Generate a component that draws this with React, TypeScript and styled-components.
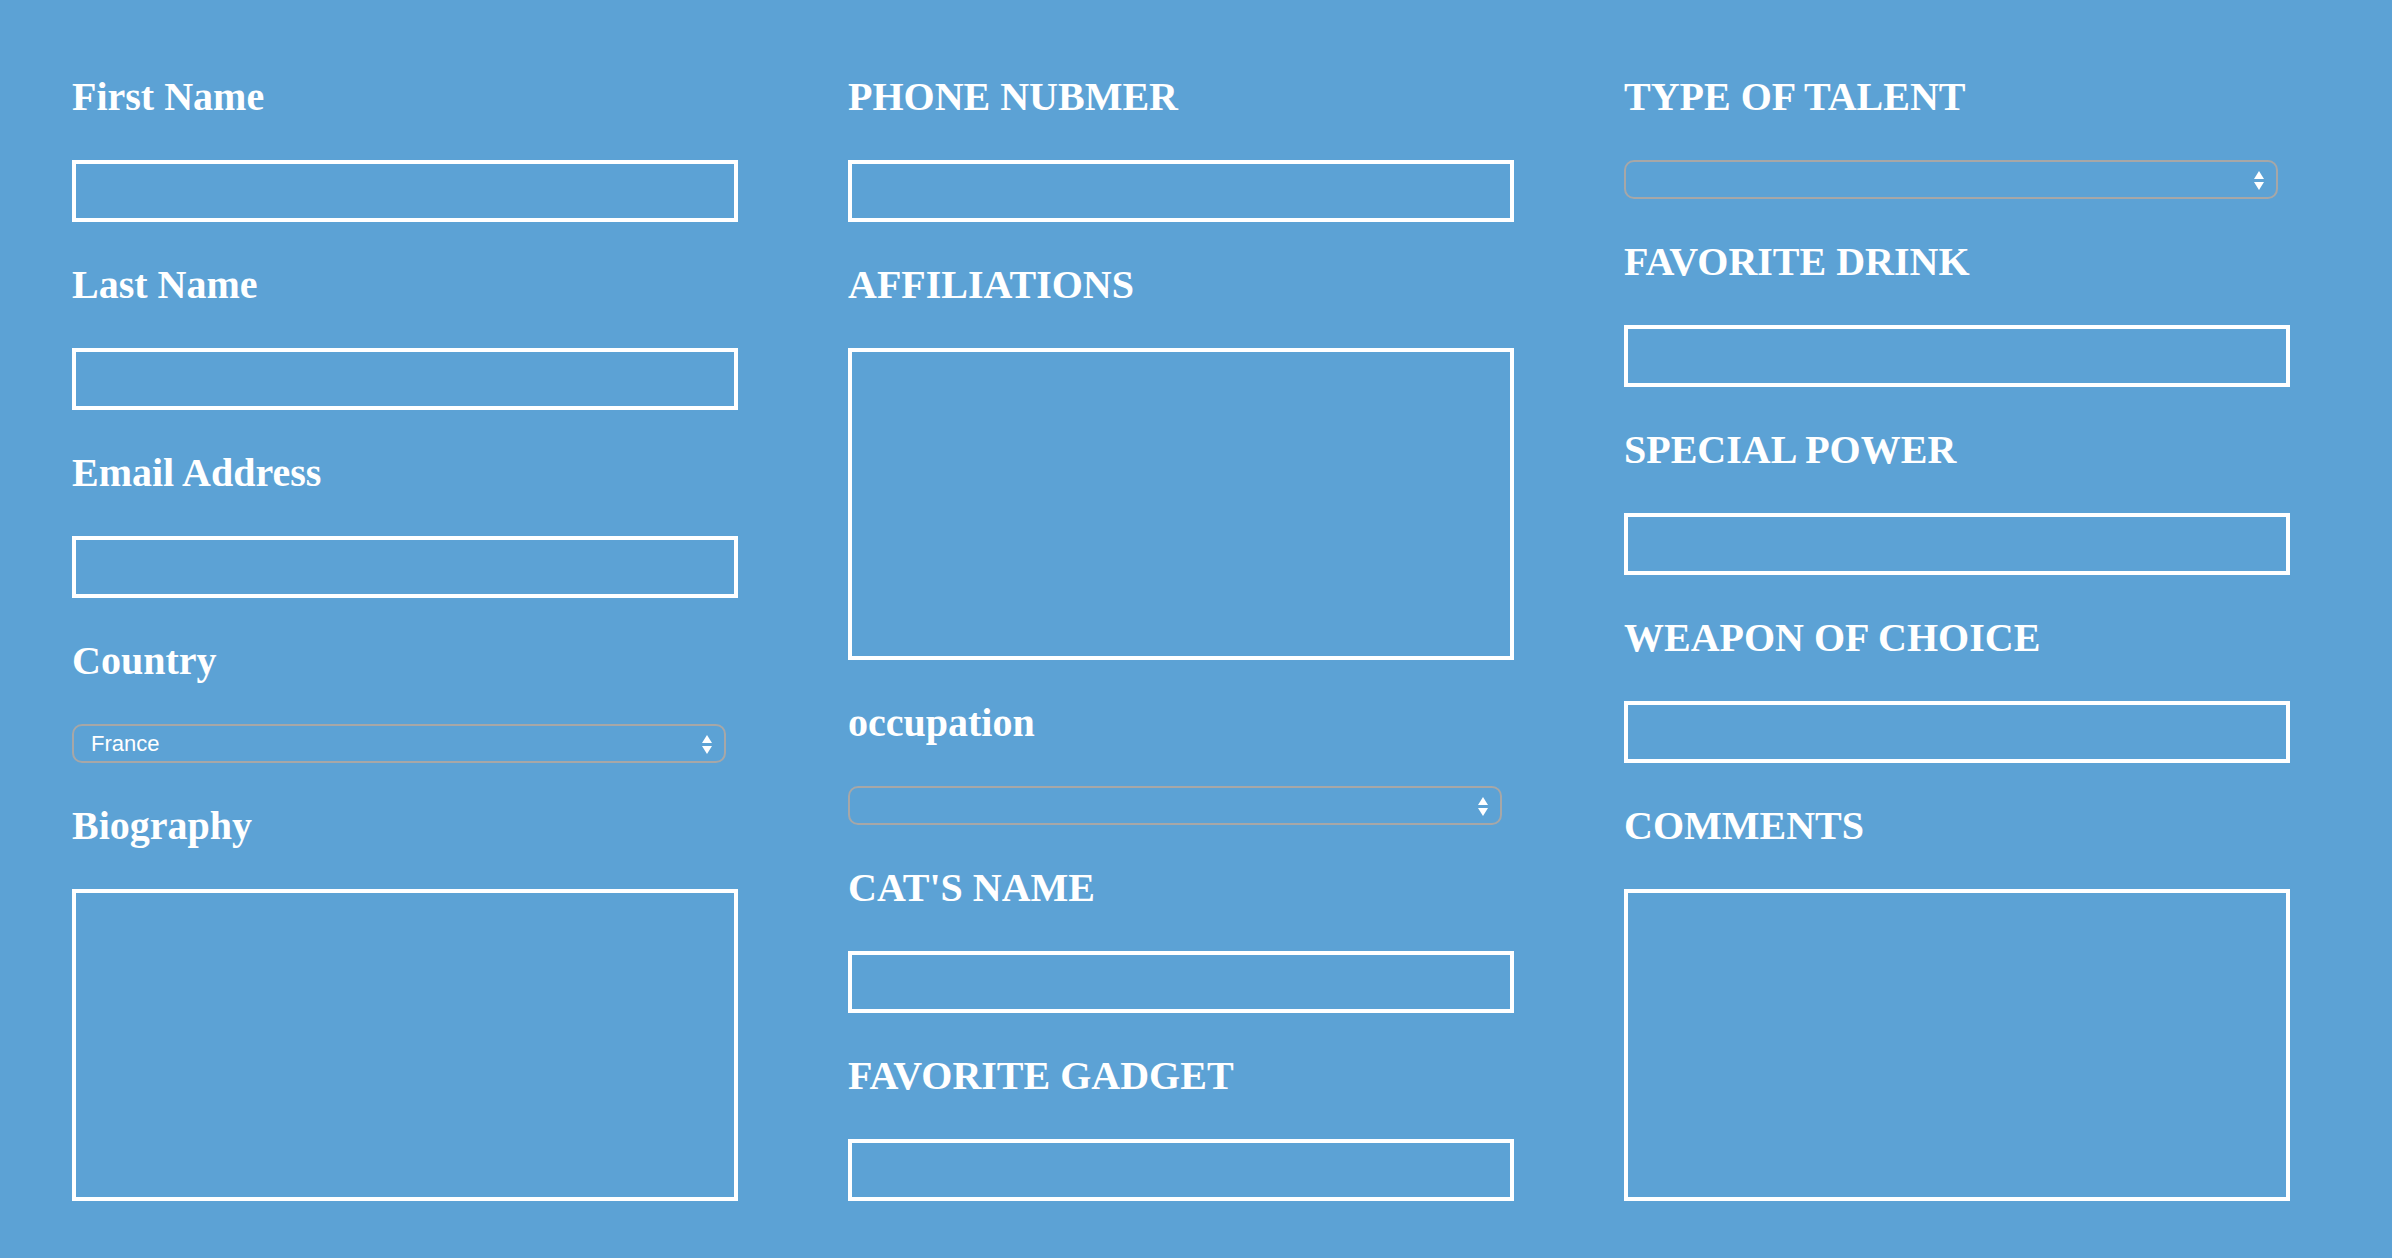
import styled, { createGlobalStyle } from "styled-components";

type FieldKindT = "input" | "textarea" | "select";

type FieldT = {
  id: string;
  label: string;
  kind: FieldKindT;
  value?: string;
};

const columns: Array<Array<FieldT>> = [
  [
    { id: "first-name", label: "First Name", kind: "input" },
    { id: "last-name", label: "Last Name", kind: "input" },
    { id: "email", label: "Email Address", kind: "input" },
    { id: "country", label: "Country", kind: "select", value: "France" },
    { id: "biography", label: "Biography", kind: "textarea" },
  ],
  [
    { id: "phone", label: "PHONE NUBMER", kind: "input" },
    { id: "affiliations", label: "AFFILIATIONS", kind: "textarea" },
    { id: "occupation", label: "occupation", kind: "select", value: "" },
    { id: "cat-name", label: "CAT'S NAME", kind: "input" },
    { id: "gadget", label: "FAVORITE GADGET", kind: "input" },
  ],
  [
    { id: "talent", label: "TYPE OF TALENT", kind: "select", value: "" },
    { id: "drink", label: "FAVORITE DRINK", kind: "input" },
    { id: "power", label: "SPECIAL POWER", kind: "input" },
    { id: "weapon", label: "WEAPON OF CHOICE", kind: "input" },
    { id: "comments", label: "COMMENTS", kind: "textarea" },
  ],
];

const GlobalStyle = createGlobalStyle`
  html, body {
    margin: 0;
    padding: 0;
    background-color: #5ca2d5;
    min-height: 100%;
  }
  body {
    min-height: 100vh;
  }
`;

const Arrows = () => (
  <ArrowsS width="12" height="20" viewBox="0 0 12 20" aria-hidden="true">
    <path d="M6 1 L11 9 L1 9 Z" fill="#fff" />
    <path d="M1 12 L11 12 L6 20 Z" fill="#fff" />
  </ArrowsS>
);

const Field = ({ field }: { field: FieldT }) => {
  return (
    <>
      <LabelS htmlFor={field.id}>{field.label}</LabelS>
      {field.kind === "input" && <InputS id={field.id} type="text" />}
      {field.kind === "textarea" && <TextAreaS id={field.id} />}
      {field.kind === "select" && (
        <SelectWrapS>
          <SelectS id={field.id} defaultValue={field.value}>
            {field.value ? <option>{field.value}</option> : <option value="" />}
          </SelectS>
          <Arrows />
        </SelectWrapS>
      )}
    </>
  );
};

const App = () => {
  return (
    <>
      <GlobalStyle />
      <FormS onSubmit={(e) => e.preventDefault()}>
        {columns.map((column, index) => {
          return (
            <ColumnS key={index}>
              {column.map((field) => (
                <Field key={field.id} field={field} />
              ))}
            </ColumnS>
          );
        })}
      </FormS>
    </>
  );
};

const FormS = styled.form`
  display: grid;
  grid-template-columns: repeat(3, 666px);
  column-gap: 110px;
  padding: 34px 0 0 72px;
  margin: 0;
`;

const ColumnS = styled.div`
  display: flex;
  flex-direction: column;
  align-items: flex-start;
`;

const LabelS = styled.label`
  display: block;
  margin: 40px 0;
  font-family: "Liberation Serif", "Times New Roman", serif;
  font-weight: bold;
  font-size: 40px;
  line-height: 46px;
  color: #fff;
`;

const InputS = styled.input`
  display: block;
  box-sizing: border-box;
  width: 666px;
  height: 62px;
  margin: 0;
  padding: 0 12px;
  border: 4px solid #fff;
  border-radius: 0;
  background: transparent;
  color: #fff;
  font-family: "Liberation Sans", Arial, sans-serif;
  font-size: 26px;
  outline: none;
`;

const TextAreaS = styled.textarea`
  display: block;
  box-sizing: border-box;
  width: 666px;
  height: 312px;
  margin: 0;
  padding: 12px;
  border: 4px solid #fff;
  border-radius: 0;
  background: transparent;
  color: #fff;
  font-family: "Liberation Sans", Arial, sans-serif;
  font-size: 26px;
  resize: none;
  outline: none;
`;

const SelectWrapS = styled.div`
  position: relative;
  width: 654px;
  height: 39px;
`;

const SelectS = styled.select`
  appearance: none;
  display: block;
  box-sizing: border-box;
  width: 100%;
  height: 100%;
  margin: 0;
  padding: 0 40px 0 17px;
  border: 2px solid #a7a7a7;
  border-radius: 10px;
  background: transparent;
  color: #fff;
  font-family: "Liberation Sans", Arial, sans-serif;
  font-size: 22px;
  outline: none;
`;

const ArrowsS = styled.svg`
  position: absolute;
  right: 13px;
  top: 10px;
  pointer-events: none;
`;

export default App;
